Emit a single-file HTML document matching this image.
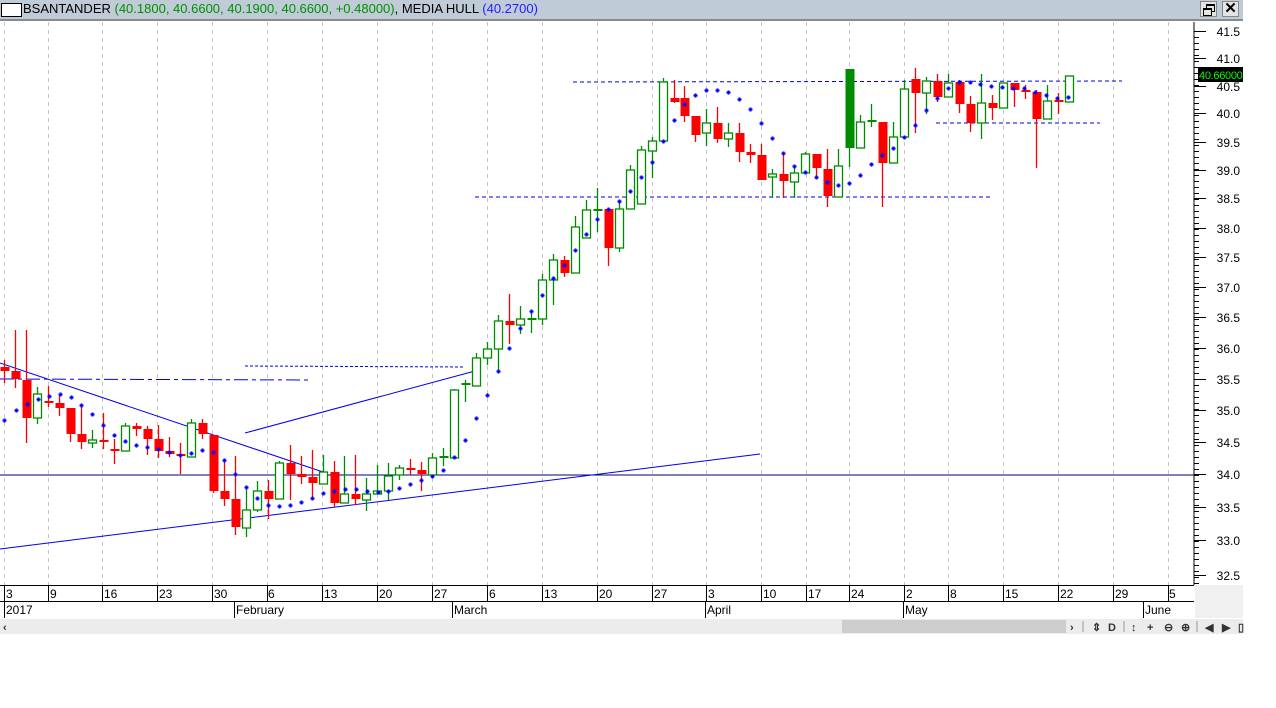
<!DOCTYPE html>
<html><head><meta charset="utf-8"><style>
body{margin:0;width:1276px;height:708px;background:#fff;overflow:hidden;font-family:"Liberation Sans",sans-serif;position:relative}
#hdr{position:absolute;left:0;top:0;width:1243px;height:19px;background:#bfcbd7;border-bottom:2px solid #8a8a8a}
#hdr .t{position:absolute;left:23px;top:0;font-size:13px;line-height:17px;white-space:nowrap;color:#000}
.g{color:#009000}.b{color:#2020ff}
.btn{position:absolute;top:1px;width:17px;height:16px;background:#e4e4e4;border:1px solid #888;box-sizing:border-box}
svg{position:absolute;left:0;top:0}
</style></head><body>
<div id="hdr"><div style="position:absolute;left:1px;top:3px;width:19px;height:12px;border:1px solid #000;background:#fff"></div>
<div class="t">BSANTANDER <span class="g">(40.1800, 40.6600, 40.1900, 40.6600, +0.48000)</span>, MEDIA HULL <span class="b">(40.2700)</span></div>
<div class="btn" style="left:1200px"><div style="position:absolute;left:5px;top:2px;width:7px;height:5px;border:1px solid #000;border-top-width:2px"></div><div style="position:absolute;left:2px;top:6px;width:7px;height:5px;border:1px solid #000;border-top-width:2px;background:#e4e4e4"></div></div>
<div class="btn" style="left:1222px;font-size:15px;font-weight:bold;text-align:center;line-height:14px">✕</div>
</div>
<svg width="1276" height="708" viewBox="0 0 1276 708" id="s" font-family="Liberation Sans, sans-serif">
<rect x="0" y="22" width="1194" height="563" fill="#fff"/>
<g id="grid" stroke="#c4c4c4" stroke-dasharray="4,4"></g>
<line x1="0" y1="475" x2="1194" y2="475" stroke="#000070"/>
<g stroke="#0000ee" fill="none" stroke-width="1">
<line x1="0" y1="363" x2="323" y2="472"/>
<line x1="245" y1="433" x2="475" y2="371"/>
<line x1="0" y1="549" x2="760" y2="454"/>
<line x1="0" y1="379" x2="312" y2="380" stroke-dasharray="14,4,4,4"/>
<line x1="245" y1="366" x2="465" y2="367" stroke-dasharray="3,2"/>
<line x1="573" y1="82" x2="1122" y2="81" stroke-dasharray="4,3"/>
<line x1="936" y1="123" x2="1100" y2="123" stroke-dasharray="4,3"/>
<line x1="475" y1="197" x2="990" y2="197" stroke-dasharray="4,3"/>
</g>
<g id="cand"></g>
<g id="dots" fill="#0000ff"></g>
<line x1="1194" y1="22" x2="1194" y2="585" stroke="#000"/>
<g id="ticks" stroke="#000"></g>
<g font-size="12" fill="#000" text-anchor="end">
<text x="1240" y="36">41.5</text><text x="1240" y="63">41.0</text><text x="1240" y="91">40.5</text><text x="1240" y="118">40.0</text><text x="1240" y="147">39.5</text><text x="1240" y="175">39.0</text><text x="1240" y="203">38.5</text><text x="1240" y="233">38.0</text><text x="1240" y="262">37.5</text><text x="1240" y="292">37.0</text><text x="1240" y="322">36.5</text><text x="1240" y="353">36.0</text><text x="1240" y="384">35.5</text><text x="1240" y="415">35.0</text><text x="1240" y="447">34.5</text><text x="1240" y="479">34.0</text><text x="1240" y="512">33.5</text><text x="1240" y="545">33.0</text><text x="1240" y="580">32.5</text>
</g>
<rect x="1198" y="67" width="45" height="15" fill="#000"/>
<text x="1199" y="79" font-size="11" letter-spacing="-0.3" fill="#00ff00">40.66000</text>
<rect x="0" y="585" width="1194" height="33" fill="#fff"/>
<rect x="1195" y="585" width="48" height="33" fill="#f0f0f0"/>
<line x1="0" y1="585.5" x2="1194" y2="585.5" stroke="#000"/>
<line x1="0" y1="601.5" x2="1194" y2="601.5" stroke="#000"/>
<g id="dsep" stroke="#000"></g>
<g font-size="12" fill="#000">
<text x="6" y="598">3</text><text x="50" y="598">9</text><text x="104" y="598">16</text><text x="159" y="598">23</text><text x="214" y="598">30</text><text x="268" y="598">6</text><text x="324" y="598">13</text><text x="379" y="598">20</text><text x="434" y="598">27</text><text x="489" y="598">6</text><text x="544" y="598">13</text><text x="599" y="598">20</text><text x="654" y="598">27</text><text x="708" y="598">3</text><text x="763" y="598">10</text><text x="808" y="598">17</text><text x="851" y="598">24</text><text x="906" y="598">2</text><text x="950" y="598">8</text><text x="1005" y="598">15</text><text x="1060" y="598">22</text><text x="1115" y="598">29</text><text x="1169" y="598">5</text>
<text x="6" y="614">2017</text><text x="236" y="614">February</text><text x="454" y="614">March</text><text x="707" y="614">April</text><text x="905" y="614">May</text><text x="1145" y="614">June</text>
</g>
<rect x="0" y="619" width="1243" height="15" fill="#ececec"/>
<rect x="842" y="620" width="224" height="13" fill="#cdcdcd"/>
<g font-size="11" fill="#333" font-weight="bold">
<text x="3" y="631">‹</text><text x="1070" y="631">›</text><text x="1092" y="631">⇕</text><text x="1108" y="631">D</text><text x="1131" y="631">↕</text><text x="1147" y="631">+</text><text x="1164" y="631">⊖</text><text x="1181" y="631">⊕</text><text x="1205" y="631">◀</text><text x="1222" y="631">▶</text><text x="1238" y="631">▯</text>
</g>
<g stroke="#999"><line x1="1083" y1="621" x2="1083" y2="632"/><line x1="1124" y1="621" x2="1124" y2="632"/><line x1="1197" y1="621" x2="1197" y2="632"/></g>
</svg>
<script>
var NS="http://www.w3.org/2000/svg";
function el(p,t,a){var e=document.createElementNS(NS,t);for(var k in a)e.setAttribute(k,a[k]);document.getElementById(p).appendChild(e);return e;}
var ticks=[4,48,102,157,212,267,322,377,432,487,542,597,652,706,761,806,849,904,948,1003,1058,1113,1168];
ticks.forEach(function(x){el('grid','line',{x1:x+.5,y1:22,x2:x+.5,y2:585});el('dsep','line',{x1:x+.5,y1:586,x2:x+.5,y2:601});});
[4,234,452,705,903,1143].forEach(function(x){el('dsep','line',{x1:x+.5,y1:602,x2:x+.5,y2:618});});
[31,58,86,113,142,170,198,228,257,287,317,348,379,410,442,474,507,540,575].forEach(function(y){el('ticks','line',{x1:1194,y1:y+.5,x2:1206,y2:y+.5});});
for(var y=37;y<585;y+=6){el('ticks','line',{x1:1194,y1:y+.5,x2:1199,y2:y+.5});}
var C=[[4,367,371,360,383,'r'],[15,371,379,330,388,'r'],[26,380,418,330,443,'r'],[37,394,418,387,424,'g'],[48,401,403,386,407,'r'],[59,403,408,395,416,'r'],[70,408,434,408,442,'r'],[81,434,442,404,449,'r'],[92,440,443,430,448,'g'],[103,440,442,413,449,'r'],[114,449,451,439,464,'r'],[125,426,451,423,451,'g'],[136,426,429,423,436,'r'],[147,429,439,426,455,'r'],[158,439,451,425,458,'r'],[169,451,454,437,457,'r'],[180,454,456,443,474,'r'],[191,423,457,419,457,'g'],[202,423,434,419,439,'r'],[213,435,491,435,493,'r'],[224,491,499,460,506,'r'],[235,499,527,456,535,'r'],[246,510,528,487,537,'g'],[257,491,510,481,512,'g'],[268,491,499,480,519,'r'],[279,463,499,461,499,'g'],[290,463,474,445,500,'r'],[301,474,477,456,484,'r'],[312,477,483,450,498,'r'],[323,472,484,455,484,'g'],[334,472,503,461,507,'r'],[344,494,503,456,503,'g'],[355,494,499,455,505,'r'],[366,494,500,478,511,'g'],[377,491,494,465,494,'g'],[388,476,491,463,500,'g'],[399,468,475,465,480,'g'],[410,468,470,459,475,'r'],[421,470,474,462,491,'r'],[432,458,475,453,475,'g'],[443,456,458,448,466,'G'],[454,390,458,389,458,'g'],[465,383,385,380,402,'G'],[476,358,386,353,386,'g'],[487,349,358,342,365,'g'],[498,321,349,315,372,'g'],[509,321,325,294,344,'r'],[520,319,325,306,334,'g'],[531,318,320,313,333,'G'],[542,280,319,274,325,'g'],[553,260,280,254,305,'g'],[564,260,273,256,277,'r'],[575,227,273,216,273,'g'],[586,210,238,200,238,'g'],[597,209,211,188,232,'G'],[608,209,248,209,266,'r'],[619,209,248,200,252,'g'],[630,170,209,165,209,'g'],[641,150,204,146,204,'g'],[652,141,151,137,178,'g'],[663,82,141,78,141,'g'],[674,98,102,80,103,'r'],[684,98,116,86,122,'r'],[695,116,135,116,142,'r'],[706,123,133,109,146,'g'],[717,123,139,107,143,'r'],[728,133,139,123,147,'g'],[739,133,152,123,162,'r'],[750,152,155,144,163,'r'],[761,155,180,144,180,'r'],[772,174,177,169,198,'g'],[783,174,181,153,198,'r'],[794,173,182,168,198,'g'],[805,154,173,152,173,'g'],[816,154,168,154,177,'r'],[827,169,196,149,207,'r'],[838,166,197,149,197,'g'],[849,69,148,69,167,'G'],[860,122,148,115,148,'g'],[871,120,122,104,127,'G'],[882,122,163,122,207,'r'],[893,137,163,122,163,'g'],[904,89,137,80,137,'g'],[915,79,93,68,133,'r'],[926,81,93,77,114,'g'],[937,81,97,74,102,'r'],[948,83,97,74,97,'g'],[959,82,104,80,113,'r'],[970,104,123,96,132,'r'],[981,103,123,74,139,'g'],[992,103,108,95,120,'r'],[1003,83,108,83,108,'g'],[1014,83,90,83,107,'r'],[1025,90,92,85,99,'r'],[1036,92,119,90,168,'r'],[1047,101,119,85,119,'g'],[1058,100,102,93,114,'r'],[1069,76,102,76,102,'g']];
C.forEach(function(c){var x=c[0],t=c[5];var col=t=='r'?'#ff0000':'#008c00';
el('cand','line',{x1:x+.5,y1:c[3],x2:x+.5,y2:c[4],stroke:col,'stroke-width':1.3});
var h=Math.max(c[2]-c[1],2);
if(t=='g')el('cand','rect',{x:x-3.5,y:c[1],width:8,height:h,fill:'#fff',stroke:col,'stroke-width':1.3});
else el('cand','rect',{x:x-3.5,y:c[1],width:9,height:h,fill:col});});
var D=[[4,420],[16,410],[27,404],[38,399],[49,396],[60,394],[71,397],[81,405],[92,414],[103,425],[114,435],[125,441],[136,445],[147,447],[158,449],[169,452],[180,455],[191,453],[202,450],[213,452],[224,460],[235,474],[246,487],[257,498],[268,505],[279,506],[290,505],[301,502],[312,498],[323,493],[334,491],[345,489],[356,489],[367,491],[378,492],[388,491],[399,488],[410,484],[421,480],[432,476],[443,470],[454,457],[465,440],[476,418],[487,395],[498,371],[509,348],[520,328],[531,311],[542,295],[553,278],[564,265],[575,250],[586,234],[597,219],[608,209],[619,201],[630,191],[641,177],[652,162],[663,141],[674,120],[684,104],[695,95],[706,90],[717,90],[728,92],[739,99],[750,109],[761,123],[772,138],[783,153],[794,166],[805,172],[816,177],[827,182],[838,185],[849,183],[860,175],[871,164],[882,155],[893,148],[904,137],[915,125],[926,110],[937,98],[948,88],[959,82],[970,82],[980,84],[991,86],[1002,87],[1013,88],[1024,88],[1035,92],[1046,95],[1057,98],[1068,97]];
D.forEach(function(d){el('dots','rect',{x:d[0]-1.5,y:d[1]-.5,width:4,height:2});el('dots','rect',{x:d[0]-.5,y:d[1]-1.5,width:2,height:4});});
</script>
</body></html>
